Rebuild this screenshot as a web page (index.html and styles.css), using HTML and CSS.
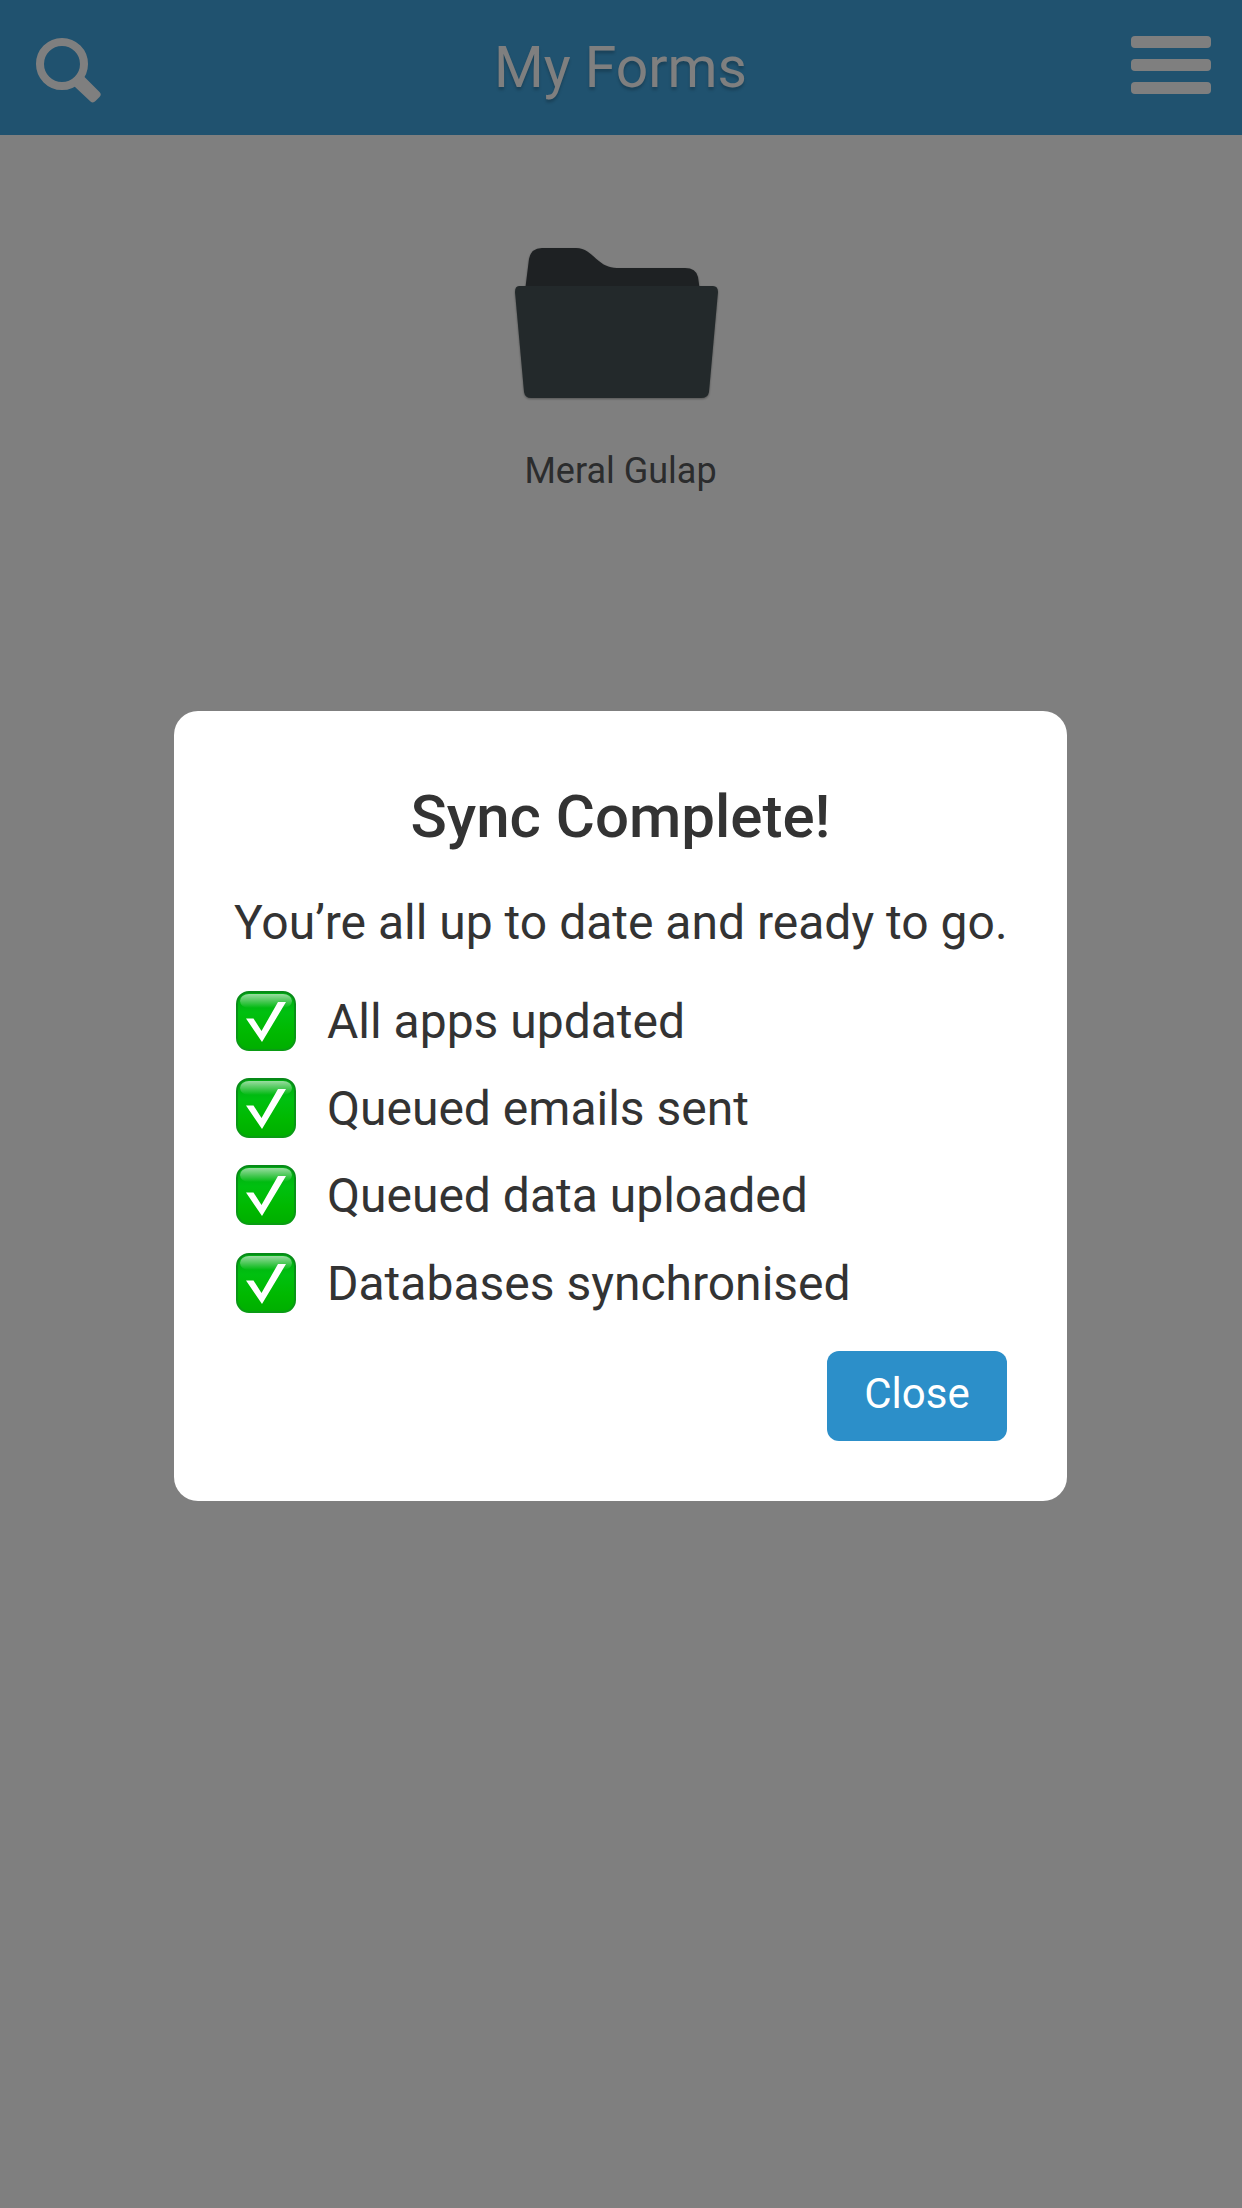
FILE: index.html
```html
<!DOCTYPE html>
<html lang="en">
<head>
<meta charset="utf-8">
<title>My Forms</title>
<link rel="stylesheet" href="styles.css">
</head>
<body>
<header class="header">
  <svg class="search" viewBox="0 0 70 70" aria-label="Search"><circle cx="28" cy="28" r="22" fill="none" stroke="#fff" stroke-width="8"/><path d="M40.5 50.5 50 40.5 65.5 56Q68 58.5 65.5 61L61.5 65Q59 67.5 56.5 65.5Z" fill="#fff"/></svg>
  <h1 class="title">My Forms</h1>
  <div class="menu"><span class="bar"></span><span class="bar"></span><span class="bar"></span></div>
</header>
<main class="forms">
  <div class="folder">
    <svg class="folder-icon" viewBox="0 0 206 156">
      <path d="M11 44 15 12Q17 1 28 1H62C79 1 83 21 103 21H171Q182 21 184 30L186 44Z" fill="#3c4246"/>
      <path d="M5 39H199Q204 39 204 45L195 145Q194 151 187 151H17Q11 151 10 145L1 45Q1 39 5 39Z" fill="#465356"/>
    </svg>
    <span class="folder-name">Meral Gulap</span>
  </div>
</main>
<div class="overlay">
  <section class="modal">
    <h2 class="modal-title">Sync Complete!</h2>
    <p class="message">You’re all up to date and ready to go.</p>
    <svg class="defs" width="0" height="0">
      <linearGradient id="green" x1="0" y1="0" x2="0" y2="1"><stop offset="0" stop-color="#00a812"/><stop offset=".35" stop-color="#00c010"/><stop offset=".7" stop-color="#00b900"/><stop offset="1" stop-color="#00ae00"/></linearGradient>
      <linearGradient id="shine" x1="0" y1="0" x2="0" y2="1"><stop offset="0" stop-color="#fff" stop-opacity=".6"/><stop offset="1" stop-color="#fff" stop-opacity="0"/></linearGradient>
      <linearGradient id="edge" x1="0" y1="0" x2="0" y2="1"><stop offset="0" stop-color="#078a18"/><stop offset="1" stop-color="#0a9c14"/></linearGradient>
      <symbol id="check" viewBox="0 0 60 60"><rect x="1" y="1" width="58" height="58" rx="12" fill="url(#green)" stroke="url(#edge)" stroke-width="2"/><rect x="4" y="3" width="52" height="14" rx="9" fill="url(#shine)"/><path d="M10 27.5H17.5L25.5 40 42 11H50L26 51Z" fill="#fff"/></symbol>
    </svg>
    <ul class="status">
      <li class="item"><svg class="check"><use href="#check"/></svg><span class="label">All apps updated</span></li>
      <li class="item"><svg class="check"><use href="#check"/></svg><span class="label">Queued emails sent</span></li>
      <li class="item"><svg class="check"><use href="#check"/></svg><span class="label">Queued data uploaded</span></li>
      <li class="item"><svg class="check"><use href="#check"/></svg><span class="label">Databases synchronised</span></li>
    </ul>
    <button class="close">Close</button>
  </section>
</div>
</body>
</html>
```
FILE: styles.css
```css
* { box-sizing: border-box; }
body { margin: 0; height: 2208px; overflow: hidden; background: #fff; color: #333; font-family: Roboto, sans-serif; }
.header { height: 135px; padding: 0 31px 0 34px; display: grid; grid-template-columns: 80px 1fr 80px; align-items: center; background: #40a4de; color: #fff; }
.search { width: 70px; height: 70px; margin-top: 7px; }
.title { margin: 0; padding-right: 4px; text-align: center; font-size: 57px; font-weight: 400; line-height: 66px; text-shadow: 0 3px 3px rgba(0,0,0,.2); }
.menu { display: flex; flex-direction: column; gap: 11px; margin-top: -5px; }
.bar { height: 12px; border-radius: 4px; background: #fff; }
.forms { padding-top: 112px; display: flex; justify-content: center; }
.folder { display: flex; flex-direction: column; align-items: center; }
.folder-icon { width: 206px; height: 156px; margin-right: 8px; filter: drop-shadow(0 1px 1px rgba(0,0,0,.35)); }
.folder-name { margin: 47px 1px 0 0; font-size: 36px; line-height: 42px; color: #56585b; }
.overlay { position: fixed; inset: 0; padding: 4px 1px 0 0; display: flex; align-items: center; justify-content: center; background: rgba(0,0,0,.5); }
.modal { width: 893px; height: 790px; padding: 60px; display: flex; flex-direction: column; border-radius: 24px; background: #fff; }
.modal-title { margin: 10px 0 0; text-align: center; font-size: 60px; font-weight: 500; line-height: 72px; }
.message { margin: 40px 0 0; font-size: 48px; line-height: 60px; white-space: nowrap; }
.defs { display: block; }
.status { list-style: none; margin: 24px 0 0; padding: 0; display: flex; flex-direction: column; }
.item { height: 87.4px; display: flex; align-items: center; gap: 31px; font-size: 48px; line-height: 60px; white-space: nowrap; }
.label { padding-top: 2px; }
.check { width: 60px; height: 60px; margin-left: 2px; }
.close { align-self: flex-end; width: 180px; height: 90px; margin-top: auto; padding: 0 0 4px; border: 0; border-radius: 12px; background: #2c8fc9; color: #fff; font: 400 42px/48px Roboto, sans-serif; }
```
